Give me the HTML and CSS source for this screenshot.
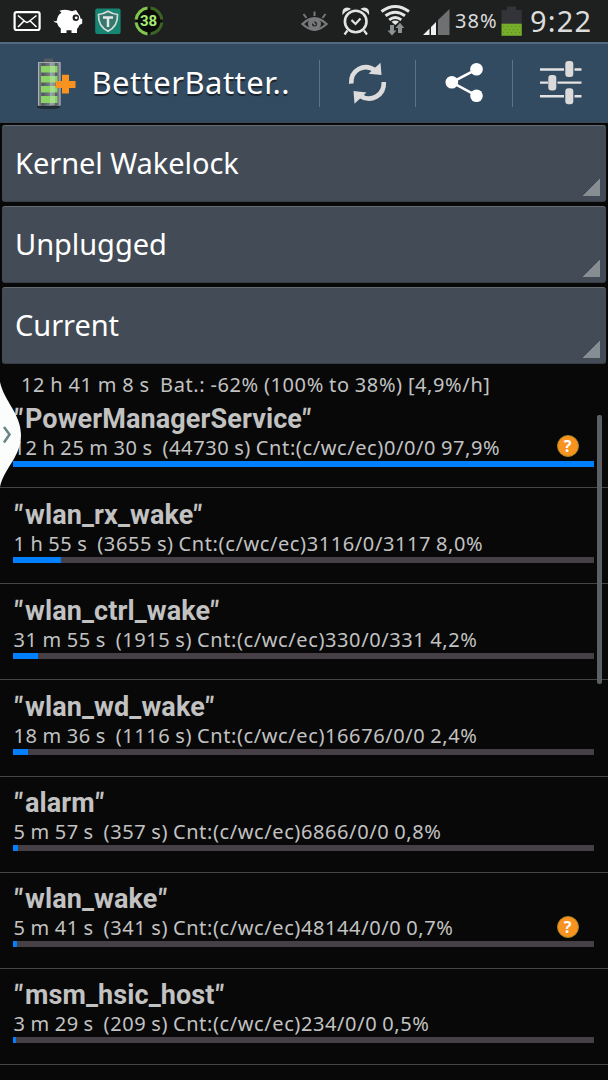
FILE: index.html
```html
<!DOCTYPE html>
<html lang="en">
<head>
<meta charset="utf-8">
<title>BetterBatteryStats</title>
<link rel="stylesheet" href="styles.css">
</head>
<body>
<div class="phone">
  <header class="status">
    <div class="status-left">
      <svg width="28" height="42" viewBox="13 0 28 42" fill="none" stroke="#fff" stroke-width="1.6"><rect x="14.6" y="12.2" width="25" height="17.8" rx="2" stroke-width="2.200"/><path d="M18 15.5L25 21.5Q27 23.2 29 21.5L36.500 15.500M18 27L24 21M36.500 27L30.200 21"/></svg>
      <svg width="30" height="42" viewBox="53 0 30 42"><path fill="#fff" d="M53.500 20.500Q55 22 56.800 20.800Q57.500 15 61.500 12.800L59.500 10.700Q66 8.500 72 11.300L76 10L78.500 14Q80.500 16 80.500 18.500L82.200 19V23.500L79.500 25Q78.500 27.500 77 29V33H71.500V30.200H66.500V33H60.800V28.500Q57.800 26.500 57 22.700Q54.500 23 53.500 20.500Z"/><circle cx="75.800" cy="17.800" r="3.200" fill="#1e201f"/><circle cx="76.200" cy="17.800" r="1.400" fill="#fff"/></svg>
      <svg class="shield" width="26" height="42" viewBox="95.500 0 26 42"><rect x="95.700" y="8.400" width="25.400" height="25.600" rx="2" fill="#168571"/><path d="M108.500 11.300Q113 14 118 14.500Q118.500 26.500 108.500 31.200Q98.500 26.500 99 14.500Q104 14 108.500 11.300Z" fill="#37786e" stroke="#d5dad8" stroke-width="1.700"/><path d="M103.500 17.500H113.500M108.500 17.500V27" stroke="#e5e8e7" stroke-width="2.500" fill="none"/></svg>
      <div class="ring">
        <svg width="30" height="42" viewBox="133.700 0 30 42" fill="none" stroke-width="3"><circle cx="148.700" cy="21" r="13" fill="#0a0c0a" stroke="none"/><g stroke="#83c64d"><path d="M147.200 8.100A13 13 0 0 0 135.800 19.500M135.800 22.500A13 13 0 0 0 147.200 33.900"/></g><g stroke="#3c6324"><path d="M150.200 8.100A13 13 0 0 1 161.600 19.500M161.600 22.500A13 13 0 0 1 150.200 33.900"/></g></svg>
        <span class="ring-num">38</span>
      </div>
    </div>
    <div class="status-right">
      <svg width="28" height="42" viewBox="300 0 28 42" fill="none" stroke="#77797a" stroke-width="2"><path stroke-width="2.400" d="M302.500 24Q314.500 12.500 326.500 24Q314.500 35.500 302.500 24Z"/><circle cx="314.500" cy="24" r="4.500" stroke-width="4"/><path d="M312 21.500L315.500 25M314.500 11.500V16M303.500 14L306.500 18M325.500 14L322.500 18"/></svg>
      <svg class="alarm" width="28" height="42" viewBox="342 0 28 42" fill="none" stroke="#e4e4e4"><circle cx="355.700" cy="21.500" r="10.800" stroke-width="2.600"/><path stroke-width="2.200" d="M351.500 20L355.500 24L360.500 18.500M347.500 30.500L344.500 34.500M364 30.500L367 34.500"/><path fill="#e4e4e4" stroke="none" d="M342.500 15Q341.500 8 347 7.500Q350 7.500 351 9Q345.500 11 342.500 15ZM369 15Q370 8 364.500 7.500Q361.500 7.500 360.500 9Q366 11 369 15Z"/></svg>
      <svg class="wifi" width="30" height="42" viewBox="380 0 30 42" fill="none" stroke="#e4e4e4" stroke-width="2.900"><path d="M381.500 11.500Q395.200 1.500 409 11.500M385.500 15.800Q395.200 8.800 405 15.800M389.200 19.800Q395.200 15.300 401.300 19.800"/><path d="M391.500 21.700Q395.200 19.300 399 21.700L395.200 25Z" fill="#e4e4e4" stroke="none"/><path fill="#8d9092" stroke="none" d="M390 25H394V30.500H396.500L392 35.500L387.500 30.500H390ZM398 33V28H395.500L400 22.800L404.300 28H402V33Z"/></svg>
      <svg class="signal" width="28" height="42" viewBox="422 0 28 42"><path fill="#f0f0f0" d="M423 35L429.500 28.500V35ZM431 35V27L436 22V35Z"/><path fill="#6e7071" d="M438 35V20L449.500 9V35Z"/></svg>
      <span class="pct">38%</span>
      <svg class="batt" width="21" height="42" viewBox="501 0 21 42"><path fill="#34333a" d="M501.500 10H507V6.500H516V10H521.800V24H501.500Z"/><path fill="#76ad2b" d="M501.500 23.700H521.800V35.800H501.500Z"/><path stroke="#5f901e" stroke-dasharray="1 3" d="M503 26.500H521M505 29.500H521M503 32.500H521"/></svg>
      <span class="clock">9:22</span>
    </div>
  </header>

  <nav class="bar">
    <svg class="logo" width="42" height="56" viewBox="35 55 42 56">
      <defs><linearGradient id="metal"><stop offset="0" stop-color="#8b939a"/><stop offset=".2" stop-color="#50585e"/><stop offset=".55" stop-color="#79828a"/><stop offset=".8" stop-color="#505b64"/><stop offset="1" stop-color="#9299a0"/></linearGradient></defs>
      <ellipse cx="48.500" cy="107" rx="12" ry="2" fill="#202b35"/>
      <path fill="#555b60" d="M44 58.500H53V62H44Z"/><path d="M38 62H60.500V106H38Z" fill="url(#metal)"/><path d="M38 62.500H60.500" stroke="#a6abae"/>
      <path fill="#8bd267" d="M41 66H57.500V72.500H41ZM41 76H57.500V82.500H41ZM41 86H57.500V92.500H41ZM41 96H57.500V103H41Z"/>
      <path fill="#d8efd0" opacity=".35" d="M50 63H55V105H50Z"/><path stroke="#b1b7bb" stroke-width=".8" d="M38.500 63V105M60 63V105"/>
      <path fill="#f7931e" d="M62 74.700H69V81H75.500V88H69V93.500H62V88H55.500V81H62Z"/>
    </svg>
    <h1 class="app">BetterBatter..</h1>
    <div class="actions">
      <div class="action"><svg width="40" height="46" viewBox="348 60 40 46"><g fill="none" stroke="#dcdcdc" stroke-width="4.600"><path d="M352.200 83.700C351.500 70 365 62.500 376.500 70.500M384.800 82C385.500 95.500 372 103 360.500 95.500"/></g><path fill="#dcdcdc" d="M381.500 62.800L382.500 75L369.500 73.800ZM355.500 103.800L354.500 91L367.500 92.500Z"/></svg></div>
      <div class="action"><svg width="40" height="46" viewBox="444.500 60 40 46"><path d="M477 69.300L452.300 82.300L477 95.700" fill="none" stroke="#fff" stroke-width="2.600"/><g fill="#fff"><circle cx="477" cy="69.300" r="6.300"/><circle cx="452.300" cy="82.300" r="6.300"/><circle cx="477" cy="95.700" r="6.300"/></g></svg></div>
      <div class="action"><svg width="44" height="46" viewBox="538 60 44 46"><path d="M540 69.500H564M574.500 69.500H581.500M540 82.600H548M557.500 82.600H581.500M540 96.300H564M574.500 96.300H581.500" stroke="#e2e2e2" stroke-width="2.400"/><g fill="#dadada"><rect x="565.300" y="61" width="8" height="16" rx="3"/><rect x="548.300" y="75" width="8" height="15.500" rx="3"/><rect x="565.300" y="88.300" width="8" height="16" rx="3"/></g></svg></div>
    </div>
  </nav>

  <section class="spinners">
    <div class="spinner">Kernel Wakelock</div>
    <div class="spinner">Unplugged</div>
    <div class="spinner">Current</div>
  </section>

  <p class="summary">12 h 41 m 8 s  Bat.: -62% (100% to 38%) [4,9%/h]</p>

  <ul class="list">
    <li class="row"><h2 class="name"><span class="quote">"</span>PowerManagerService<span class="quote">"</span></h2><div class="info"><span>12 h 25 m 30 s  (44730 s) Cnt:(c/wc/ec)0/0/0 97,9%</span><b class="help">?</b></div><div class="track"><div class="fill" style="width:100%"></div></div></li>
    <li class="row"><h2 class="name"><span class="quote">"</span>wlan_rx_wake<span class="quote">"</span></h2><div class="info"><span>1 h 55 s  (3655 s) Cnt:(c/wc/ec)3116/0/3117 8,0%</span></div><div class="track"><div class="fill" style="width:8.2%"></div></div></li>
    <li class="row"><h2 class="name"><span class="quote">"</span>wlan_ctrl_wake<span class="quote">"</span></h2><div class="info"><span>31 m 55 s  (1915 s) Cnt:(c/wc/ec)330/0/331 4,2%</span></div><div class="track"><div class="fill" style="width:4.3%"></div></div></li>
    <li class="row"><h2 class="name"><span class="quote">"</span>wlan_wd_wake<span class="quote">"</span></h2><div class="info"><span>18 m 36 s  (1116 s) Cnt:(c/wc/ec)16676/0/0 2,4%</span></div><div class="track"><div class="fill" style="width:2.5%"></div></div></li>
    <li class="row"><h2 class="name"><span class="quote">"</span>alarm<span class="quote">"</span></h2><div class="info"><span>5 m 57 s  (357 s) Cnt:(c/wc/ec)6866/0/0 0,8%</span></div><div class="track"><div class="fill" style="width:0.8%"></div></div></li>
    <li class="row"><h2 class="name"><span class="quote">"</span>wlan_wake<span class="quote">"</span></h2><div class="info"><span>5 m 41 s  (341 s) Cnt:(c/wc/ec)48144/0/0 0,7%</span><b class="help">?</b></div><div class="track"><div class="fill" style="width:0.75%"></div></div></li>
    <li class="row"><h2 class="name"><span class="quote">"</span>msm_hsic_host<span class="quote">"</span></h2><div class="info"><span>3 m 29 s  (209 s) Cnt:(c/wc/ec)234/0/0 0,5%</span></div><div class="track"><div class="fill" style="width:0.5%"></div></div></li>
  </ul>

  <div class="scrollbar"></div>
  <svg class="drawer" width="22" height="108" viewBox="0 0 22 108"><path fill="#fbfdfc" d="M0 2C4 21 21 34 21 55C21 77 4 88 0 107Z"/><path d="M4 47L9.500 54.500L4 62.500" fill="none" stroke="#688583" stroke-width="2.500"/></svg>
</div>
</body>
</html>
```
FILE: styles.css
```css
* { box-sizing: border-box; }

body {
  margin: 0;
  background: #080808;
  font-family: "Noto Sans", sans-serif;
  color: #c2c2c2;
}

.phone {
  position: relative;
  width: 608px;
  height: 1080px;
  overflow: hidden;
  background: #080808;
}

svg { display: block; flex: none; }

/* status bar */
.status {
  display: flex;
  justify-content: space-between;
  height: 42px;
  padding: 0 16px 0 13px;
  background: #1e201f;
}

.status-left, .status-right { display: flex; }
.status-left { gap: 12.2px; }
.ring { position: relative; }

.ring-num {
  position: absolute;
  inset: 0;
  font: bold 15px/43px Roboto, sans-serif;
  text-align: center;
  color: #a9ec77;
}

.alarm { margin-left: 14px; }
.wifi { margin-left: 10px; }
.signal { margin-left: 12px; }

.pct {
  width: 46px;
  margin-left: 5px;
  font-size: 20px;
  letter-spacing: 1.1px;
  line-height: 42px;
  color: #dcdcdc;
}

.clock {
  width: 62px;
  margin-left: 8px;
  font-size: 29px;
  line-height: 42px;
  letter-spacing: 1.2px;
  white-space: nowrap;
  color: #dcdcdc;
}

/* action bar */
.bar {
  display: flex;
  align-items: center;
  height: 81px;
  padding-left: 35px;
  border-top: 2px solid #516a7f;
  border-bottom: 1px solid #3a4650;
  background: #334b61;
}

.app {
  width: 227px;
  margin: -2px 0 0 14.500px;
  font-size: 31px;
  font-weight: 400;
  line-height: 40px;
  letter-spacing: .45px;
  white-space: nowrap;
  color: #fff;
  text-shadow: 0 2px 1px #18222c;
}

.actions { display: flex; flex: 1; height: 47px; }

.action {
  display: flex;
  flex: 1;
  align-items: center;
  justify-content: center;
  border-left: 1px solid #5c7386;
}

/* dropdowns */
.spinners {
  display: flex;
  flex-direction: column;
  gap: 4px;
  padding: 2px 2px 0;
}

.spinner {
  height: 77px;
  padding-left: 13px;
  border-top: 1px solid #656c73;
  border-bottom: 1px solid #373e46;
  border-radius: 3px;
  background: linear-gradient(135deg, transparent 50%, #868d93 51%) right 6px bottom 5px / 18px 18px no-repeat #434c56;
  font-size: 29px;
  line-height: 74px;
  letter-spacing: -.05px;
  color: #fff;
}

.summary {
  height: 28px;
  margin: 0 0 0 21px;
  font-size: 20px;
  line-height: 42px;
  letter-spacing: .6px;
  word-spacing: -.6px;
  white-space: pre;
}

/* wakelock list */
.list { margin: 0; padding: 0; list-style: none; }

.row {
  height: 96.170px;
  padding: 10.500px 14px 0 13px;
  border-bottom: 1px solid #454545;
}

.name {
  margin: 0;
  padding-left: 1px;
  font: bold 27px/32px Roboto, sans-serif;
  letter-spacing: .1px;
  white-space: nowrap;
}

.quote {
  display: inline-block;
  width: 11px;
  text-align: center;
  transform: translateX(-1.500px) skewX(-6deg);
}

.info {
  display: flex;
  align-items: center;
  justify-content: space-between;
  height: 26px;
  padding: 0 15.500px 0 .5px;
  font-size: 20px;
  line-height: 26px;
  letter-spacing: .6px;
  word-spacing: -.9px;
  white-space: pre;
}

.help {
  width: 22px;
  height: 22px;
  margin-top: -3px;
  border: 1px solid #a58324;
  border-radius: 50%;
  background: #f7931e;
  font-size: 16px;
  line-height: 20px;
  letter-spacing: 0;
  text-align: center;
  color: #fff;
}

.track { height: 6px; background: #463f46; }
.fill { height: 6px; background: #0080ff; }

/* overlays */
.scrollbar {
  position: absolute;
  top: 415px;
  left: 597px;
  width: 5px;
  height: 269px;
  border-radius: 2px;
  background: #5b6064;
}

.drawer { position: absolute; top: 380px; left: 0; }
```
